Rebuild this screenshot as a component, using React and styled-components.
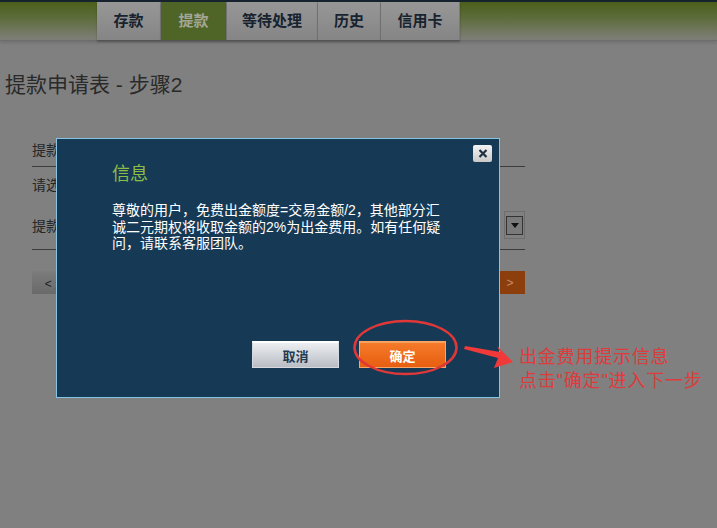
import React from 'react';
import styled, { createGlobalStyle } from 'styled-components';

const GlobalStyle = createGlobalStyle`
  html, body {
    margin: 0;
    padding: 0;
    background: #808080;
  }
  body {
    font-family: "Liberation Sans", "Noto Sans CJK SC", sans-serif;
    width: 717px;
    height: 528px;
    overflow: hidden;
  }
`;

const Page = styled.div`
  position: relative;
  width: 717px;
  height: 528px;
`;

const Header = styled.div`
  height: 38px;
  border-top: 2px solid #16222e;
  background: linear-gradient(#4b5f1b 0%, #5f6d3e 45%, #7c7d74 95%);
  box-shadow: 0 1px 0 #6d6d6d, 0 3px 3px rgba(0, 0, 0, 0.12);
  padding-left: 97px;
  display: flex;
`;

const Tab = styled.div`
  height: 38px;
  padding-bottom: 3px;
  width: ${p => p.w}px;
  box-sizing: border-box;
  display: flex;
  align-items: center;
  justify-content: center;
  font-size: 15px;
  font-weight: bold;
  font-family: "Noto Sans CJK SC", sans-serif;
  color: ${p => (p.active ? '#a3a596' : '#17232f')};
  background: ${p => (p.active ? '#4e6527' : 'linear-gradient(#979797, #858585)')};
  border-right: 1px solid #7a7a7a;
  box-shadow: 0 2px 2px rgba(0, 0, 0, 0.25);
`;

const Title = styled.h1`
  margin: 31px 0 0 5px;
  font-size: 21px;
  font-weight: normal;
  font-family: "Liberation Sans", "Noto Sans CJK SC", sans-serif;
  color: #2a2a2a;
  line-height: 28px;
`;

const Form = styled.div`
  margin: 33px 0 0 32px;
  width: 493px;
`;

const FormRow = styled.div`
  display: flex;
  align-items: center;
  justify-content: space-between;
  height: ${p => p.h}px;
  font-size: 14px;
  font-family: "Noto Sans CJK SC", sans-serif;
  color: #262626;
  border-bottom: ${p => (p.line ? '1px solid #3c3c3c' : 'none')};
`;

const SelectBox = styled.div`
  width: 19px;
  height: 26px;
  border: 1px solid #6e6e6e;
  display: flex;
  align-items: center;
  justify-content: center;
`;

const SelectArrow = styled.div`
  width: 15px;
  height: 17px;
  border: 1px solid #333;
  background: #7a7a7a;
  display: flex;
  align-items: center;
  justify-content: center;
  &::after {
    content: '';
    border-left: 4px solid transparent;
    border-right: 4px solid transparent;
    border-top: 5px solid #111;
  }
`;

const ButtonRow = styled.div`
  display: flex;
  justify-content: space-between;
  margin-top: 21px;
`;

const StepButton = styled.div`
  width: ${p => p.w}px;
  height: 23px;
  display: flex;
  align-items: center;
  justify-content: center;
  font-size: 12px;
  color: ${p => (p.next ? '#c78b6c' : '#222')};
  background: ${p => (p.next ? '#8c3f0c' : 'linear-gradient(#7c7c7c, #6a6a6a)')};
`;

const Dialog = styled.div`
  position: absolute;
  left: 56px;
  top: 138px;
  width: 442px;
  height: 258px;
  background: #163a55;
  border: 1px solid #86c3e3;
`;

const CloseButton = styled.div`
  position: absolute;
  right: 7px;
  top: 6px;
  width: 19px;
  height: 17px;
  border-radius: 2px;
  background: linear-gradient(#f4f4f4, #c9c9c9);
  display: flex;
  align-items: center;
  justify-content: center;
`;

const DialogBody = styled.div`
  padding: 22px 0 0 55px;
`;

const DialogTitle = styled.div`
  font-family: "Noto Sans CJK SC", sans-serif;
  font-size: 18px;
  line-height: 22px;
  color: #8dbd45;
`;

const DialogText = styled.p`
  margin: 19px 0 0;
  font-family: "Liberation Sans", "Noto Sans CJK SC", sans-serif;
  font-size: 14px;
  line-height: 16.5px;
  color: #fff;
  white-space: nowrap;
`;

const DialogActions = styled.div`
  position: absolute;
  left: 195px;
  top: 202px;
  display: flex;
  gap: 20px;
`;

const DialogButton = styled.div`
  width: 87px;
  height: 27px;
  box-sizing: border-box;
  display: flex;
  align-items: center;
  justify-content: center;
  font-family: "Noto Sans CJK SC", sans-serif;
  font-size: 13px;
  font-weight: bold;
  color: ${p => (p.primary ? '#fff' : '#1d3a55')};
  background: ${p =>
    p.primary ? 'linear-gradient(#f47a2a, #e85e10)' : 'linear-gradient(#eceef1, #b9bdc4)'};
  border: 1px solid ${p => (p.primary ? '#f6a66a' : '#d6dae0')};
  border-top: 2px solid ${p => (p.primary ? '#f8a060' : '#ffffff')};
`;

const Annotation = styled.svg`
  position: absolute;
  left: 0;
  top: 0;
  pointer-events: none;
`;

const Note = styled.div`
  position: absolute;
  left: 519px;
  top: 345px;
  font-family: "Liberation Sans", "Noto Sans CJK SC", sans-serif;
  font-size: 18px;
  line-height: 24px;
  letter-spacing: 0.8px;
  color: #de3b3b;
  white-space: nowrap;
`;

export default function App() {
  return (
    <Page>
      <GlobalStyle />
      <Header>
        <Tab w={64}>存款</Tab>
        <Tab w={66} active>提款</Tab>
        <Tab w={91}>等待处理</Tab>
        <Tab w={63}>历史</Tab>
        <Tab w={79}>信用卡</Tab>
      </Header>
      <Title>提款申请表 - 步骤2</Title>
      <Form>
        <FormRow h={34} line>提款方式</FormRow>
        <FormRow h={34}>请选择您的提款方式</FormRow>
        <FormRow h={48} line>
          <span>提款账户</span>
          <SelectBox>
            <SelectArrow />
          </SelectBox>
        </FormRow>
        <ButtonRow>
          <StepButton w={60}>&lt; 返回</StepButton>
          <StepButton w={30} next>&gt;</StepButton>
        </ButtonRow>
      </Form>
      <Dialog>
        <CloseButton>
          <svg width="10" height="9" viewBox="0 0 10 9">
            <path d="M1.5 1 L8.5 8 M8.5 1 L1.5 8" stroke="#1f2f3d" strokeWidth="2.2" />
          </svg>
        </CloseButton>
        <DialogBody>
          <DialogTitle>信息</DialogTitle>
          <DialogText>
            尊敬的用户，免费出金额度=交易金额/2，其他部分汇
            <br />
            诚二元期权将收取金额的2%为出金费用。如有任何疑
            <br />
            问，请联系客服团队。
          </DialogText>
        </DialogBody>
        <DialogActions>
          <DialogButton>取消</DialogButton>
          <DialogButton primary>确定</DialogButton>
        </DialogActions>
      </Dialog>
      <Annotation width="717" height="528">
        <ellipse cx="405.5" cy="347.5" rx="51" ry="26.5" fill="none" stroke="#e03838" strokeWidth="2.5" />
        <polygon points="465,346 500,352 497,346 513,362 494,368 498,358 464,349" fill="#f03a3a" />
      </Annotation>
      <Note>
        出金费用提示信息
        <br />
        点击"确定"进入下一步
      </Note>
    </Page>
  );
}
